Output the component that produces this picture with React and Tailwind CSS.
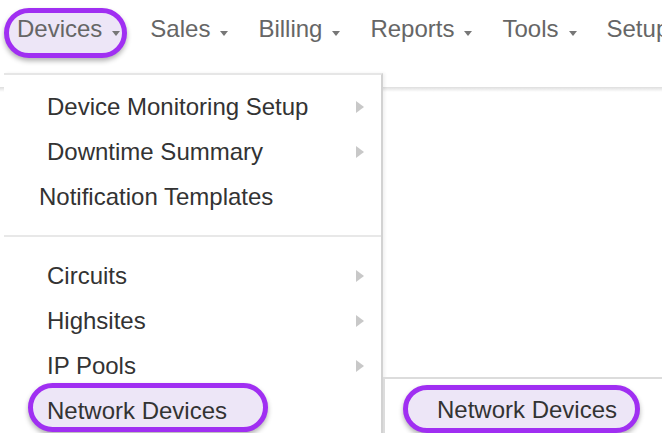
import React from "react";

const navItems = ["Devices", "Sales", "Billing", "Reports", "Tools", "Setup"];

// Purple annotation ring that sits behind a label
function Ring({ className }) {
  return (
    <span
      className={
        "absolute rounded-full border-[5px] border-[#a02ff2] bg-[#ede6f7] shadow-[0_3px_5px_rgba(0,0,0,0.3)] " +
        className
      }
    />
  );
}

function Chevron() {
  return <span className="h-0 w-0 border-y-[6px] border-l-[8px] border-y-transparent border-l-[#c8c8c8]" />;
}

function MenuRow({ label, arrow, flush, ring }) {
  return (
    <div
      className={
        "flex h-[45px] items-center justify-between pr-[17px] " + (flush ? "pl-[35px]" : "pl-[43px]")
      }
    >
      <span className="relative text-[24px] leading-6 text-[#333]">
        {ring && <Ring className="-left-[19px] -top-[16px] -right-[41px] -bottom-[9px]" />}
        <span className="relative">{label}</span>
      </span>
      {arrow && <Chevron />}
    </div>
  );
}

export default function App() {
  return (
    <div className="relative h-[433px] w-[662px] overflow-hidden bg-white font-['Liberation_Sans',Arial,sans-serif] whitespace-nowrap">
      {/* top navigation */}
      <nav className="flex h-[73px] items-start gap-[30px] pl-[17px] pt-[17px]">
        {navItems.map((label, i) => (
          <div key={label} className="relative flex shrink-0 items-start">
            {i === 0 && <Ring className="-left-[13px] -top-[9px] -right-[7px] -bottom-[17px]" />}
            <span className="relative text-[24px] leading-6 text-[#666]">{label}</span>
            <span className="relative ml-[10px] mt-[14px] h-0 w-0 border-x-[4.5px] border-t-[5px] border-x-transparent border-t-[#777]" />
          </div>
        ))}
      </nav>

      {/* page body under the navbar */}
      <div className="mt-[14px] h-[5px] bg-gradient-to-b from-[#dedede] to-white" />

      {/* Devices dropdown */}
      <div className="absolute left-[4px] top-[73px] h-[380px] w-[379px] border-t-2 border-r-2 border-t-[#e6e6e6] border-r-[#d2d2d2] bg-white pt-[9px] shadow-[2px_0_3px_rgba(0,0,0,0.06)]">
        <MenuRow label="Device Monitoring Setup" arrow />
        <MenuRow label="Downtime Summary" arrow />
        <MenuRow label="Notification Templates" flush />
        <div className="my-[16px] h-[2px] bg-[#e8e8e8]" />
        <MenuRow label="Circuits" arrow />
        <MenuRow label="Highsites" arrow />
        <MenuRow label="IP Pools" arrow />
        <MenuRow label="Network Devices" ring />
      </div>

      {/* Network Devices submenu */}
      <div className="absolute left-[383px] top-[377px] h-[70px] w-[290px] border-t-2 border-l-2 border-[#dcdcdc] bg-white pl-[52px] pt-[19px]">
        <span className="relative text-[24px] leading-6 text-[#333]">
          <Ring className="-left-[34px] -top-[11px] -right-[23px] -bottom-[10px]" />
          <span className="relative">Network Devices</span>
        </span>
      </div>
    </div>
  );
}
